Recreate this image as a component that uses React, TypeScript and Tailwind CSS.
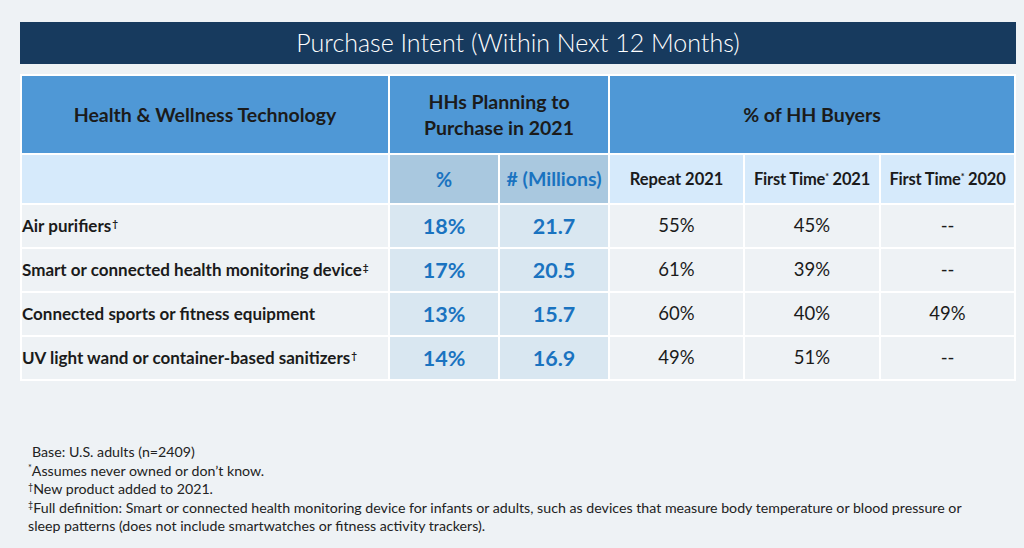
import React from "react";

interface Row {
  name: string;
  mark?: string;
  pct: string;
  millions: string;
  repeat: string;
  first21: string;
  first20: string;
}

const rows: Row[] = [
  { name: "Air purifiers", mark: "†", pct: "18%", millions: "21.7", repeat: "55%", first21: "45%", first20: "--" },
  { name: "Smart or connected health monitoring device", mark: "‡", pct: "17%", millions: "20.5", repeat: "61%", first21: "39%", first20: "--" },
  { name: "Connected sports or fitness equipment", pct: "13%", millions: "15.7", repeat: "60%", first21: "40%", first20: "49%" },
  { name: "UV light wand or container-based sanitizers", mark: "†", pct: "14%", millions: "16.9", repeat: "49%", first21: "51%", first20: "--" },
];

export default function App() {
  return (
    <div
      className="w-[1024px] h-[548px] bg-[#eef2f5] pt-[22px] px-[20px] text-[#1b1b1b]"
      style={{ fontFamily: "Lato, 'Open Sans', sans-serif" }}
    >
      {/* TITLE */}
      <div className="h-[42px] w-[996px] bg-[#173a5e] flex items-center justify-center text-white text-[25px] font-light">
        Purchase Intent (Within Next 12 Months)
      </div>

      {/* TABLE */}
      <table className="mt-[10px] w-[994px] border-collapse table-fixed">
        <colgroup>
          <col className="w-[368px]" />
          <col className="w-[110px]" />
          <col className="w-[110px]" />
          <col className="w-[135px]" />
          <col className="w-[136px]" />
          <col className="w-[135px]" />
        </colgroup>
        <thead>
          <tr className="h-[79px] bg-[#4f98d6] font-bold text-[19.5px]">
            <th className="border-2 border-white">Health &amp; Wellness Technology</th>
            <th colSpan={2} className="border-2 border-white leading-[26px]">
              HHs Planning to
              <br />
              Purchase in 2021
            </th>
            <th colSpan={3} className="border-2 border-white">% of HH Buyers</th>
          </tr>
          <tr className="h-[50px] bg-[#d6eafb] font-bold">
            <th className="border-2 border-white" />
            <th className="border-2 border-white bg-[#a9c8df] text-[#1a73c0] text-[20px]">%</th>
            <th className="border-2 border-white bg-[#a9c8df] text-[#1a73c0] text-[19.5px] whitespace-nowrap"># (Millions)</th>
            <th className="border-2 border-white text-[16.5px]">Repeat 2021</th>
            <th className="border-2 border-white text-[16.5px] whitespace-nowrap tracking-[-0.2px]">
              First Time<sup className="text-[9px]">*</sup> 2021
            </th>
            <th className="border-2 border-white text-[16.5px] whitespace-nowrap tracking-[-0.2px]">
              First Time<sup className="text-[9px]">*</sup> 2020
            </th>
          </tr>
        </thead>
        <tbody>
          {rows.map((r) => (
            <tr key={r.name} className="h-[44px]">
              <td className="border-2 border-white font-bold text-[17px] whitespace-nowrap">
                {r.name}
                {r.mark && <sup className="text-[10px] ml-[1px]">{r.mark}</sup>}
              </td>
              <td className="border-2 border-white bg-[#d9e7f1] text-center font-bold text-[21.5px] text-[#1a73c0]">
                {r.pct}
              </td>
              <td className="border-2 border-white bg-[#d9e7f1] text-center font-bold text-[21.5px] text-[#1a73c0]">
                {r.millions}
              </td>
              <td className="border-2 border-white text-center text-[18.5px]">{r.repeat}</td>
              <td className="border-2 border-white text-center text-[18.5px]">{r.first21}</td>
              <td className="border-2 border-white text-center text-[18.5px]">{r.first20}</td>
            </tr>
          ))}
        </tbody>
      </table>

      {/* FOOTNOTES */}
      <div className="mt-[62px] ml-[8px] text-[14.2px] leading-[18.5px] text-[#222]">
        <p className="pl-[4px]">Base: U.S. adults (n=2409)</p>
        <p>
          <sup className="text-[9px]">*</sup>Assumes never owned or don’t know.
        </p>
        <p>
          <sup className="text-[9px]">†</sup>New product added to 2021.
        </p>
        <p>
          <sup className="text-[9px]">‡</sup>Full definition: Smart or connected health monitoring device for infants or adults, such as devices that measure body temperature or blood pressure or
          <br />
          sleep patterns (does not include smartwatches or fitness activity trackers).
        </p>
      </div>
    </div>
  );
}
